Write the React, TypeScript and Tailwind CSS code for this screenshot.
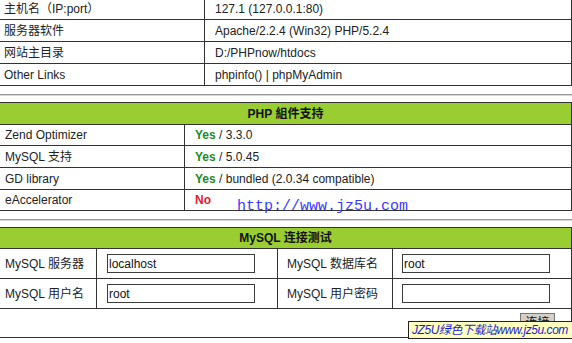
const info = [
  ["主机名（IP:port）", "127.1 (127.0.0.1:80)"],
  ["服务器软件", "Apache/2.2.4 (Win32) PHP/5.2.4"],
  ["网站主目录", "D:/PHPnow/htdocs"],
  ["Other Links", "phpinfo() | phpMyAdmin"],
];

const infoHeights = ["h-[22px] border-b", "h-[22px] border-b", "h-[22px] border-b", "h-[21px]"];

const modules = [
  { name: "Zend Optimizer", ok: true, ver: " / 3.3.0" },
  { name: "MySQL 支持", ok: true, ver: " / 5.0.45" },
  { name: "GD library", ok: true, ver: " / bundled (2.0.34 compatible)" },
  { name: "eAccelerator", ok: false, ver: "" },
];

const moduleHeights = ["h-[21px] border-b", "h-[22px] border-b", "h-[22px] border-b", "h-[20px]"];

const Separator = () => (
  <div className="mt-[8px] h-[2px] border-t border-[#9a9a9a] bg-[#d6d6d6]" />
);

const TextInput = ({ value }: { value: string }) => (
  <input
    readOnly
    defaultValue={value}
    className="w-[148px] h-[19px] border border-[#3c3c3c] bg-white px-[1px] text-[12px] text-[#111] outline-none"
  />
);

export default function App() {
  return (
    <div className="relative w-[572px] h-[343px] overflow-hidden bg-white text-[12px] text-[#222] font-['Liberation_Sans','Noto_Sans_CJK_SC',sans-serif]">
      {/* 基本信息 */}
      <div className="-mt-[2px] -ml-px w-[573px] border-x border-b border-[#333]">
        {info.map(([k, v], i) => (
          <div key={k} className={`flex border-[#333] ${infoHeights[i]}`}>
            <div className="w-[205px] border-r border-[#333] pl-[4px] flex items-center">{k}</div>
            <div className="flex-1 pl-[10px] flex items-center">{v}</div>
          </div>
        ))}
      </div>

      <Separator />

      {/* PHP 組件支持 */}
      <div className="mt-[6px] -ml-px w-[573px] border border-[#333]">
        <div className="h-[22px] border-b border-[#333] bg-[#9acd32] flex items-center justify-center font-bold text-[#111]">
          PHP 組件支持
        </div>
        {modules.map((m, i) => (
          <div key={m.name} className={`flex border-[#333] ${moduleHeights[i]}`}>
            <div className="w-[185px] border-r border-[#333] pl-[5px] flex items-center">{m.name}</div>
            <div className="flex-1 pl-[10px] flex items-center">
              {m.ok ? (
                <span className="font-bold text-[#1f8a1f]">Yes</span>
              ) : (
                <span className="font-bold text-[#e3202c]">No</span>
              )}
              <span className="whitespace-pre">{m.ver}</span>
            </div>
          </div>
        ))}
      </div>

      <Separator />

      {/* MySQL 连接测试 */}
      <div className="mt-[6px] -ml-px w-[573px] border border-[#333]">
        <div className="h-[21px] border-b border-[#333] bg-[#9acd32] flex items-center justify-center font-bold text-[#111]">
          MySQL 连接测试
        </div>
        <div className="flex h-[30px] border-b border-[#333]">
          <div className="w-[97px] border-r border-[#333] pl-[5px] flex items-center">MySQL 服务器</div>
          <div className="w-[181px] border-r border-[#333] pl-[10px] flex items-center">
            <TextInput value="localhost" />
          </div>
          <div className="w-[115px] border-r border-[#333] pl-[9px] flex items-center">MySQL 数据库名</div>
          <div className="flex-1 pl-[9px] flex items-center">
            <TextInput value="root" />
          </div>
        </div>
        <div className="flex h-[30px] border-b border-[#333]">
          <div className="w-[97px] border-r border-[#333] pl-[5px] flex items-center">MySQL 用户名</div>
          <div className="w-[181px] border-r border-[#333] pl-[10px] flex items-center">
            <TextInput value="root" />
          </div>
          <div className="w-[115px] border-r border-[#333] pl-[9px] flex items-center">MySQL 用户密码</div>
          <div className="flex-1 pl-[9px] flex items-center">
            <TextInput value="" />
          </div>
        </div>
        <div className="h-[28px] flex justify-end items-start pt-[4px] pr-[16px]">
          <button className="w-[35px] h-[19px] bg-[#d4d0c8] border border-[#777] text-[12px] text-[#111] leading-none">
            连接
          </button>
        </div>
      </div>

      {/* 水印 */}
      <div className="absolute left-[237px] top-[198px] leading-[17px] text-[15px] text-[#3a3aff] font-['Liberation_Mono',monospace]">
        http://www.jz5u.com
      </div>
      <div className="absolute left-[408px] top-[321px] w-[164px] h-[18px] bg-[#ffffc0] border border-r-0 border-[#222] pl-[3px] flex items-center italic text-[12px] tracking-[-0.45px] text-[#1c1cd0] whitespace-nowrap">
        JZ5U绿色下载站www.jz5u.com
      </div>
    </div>
  );
}
